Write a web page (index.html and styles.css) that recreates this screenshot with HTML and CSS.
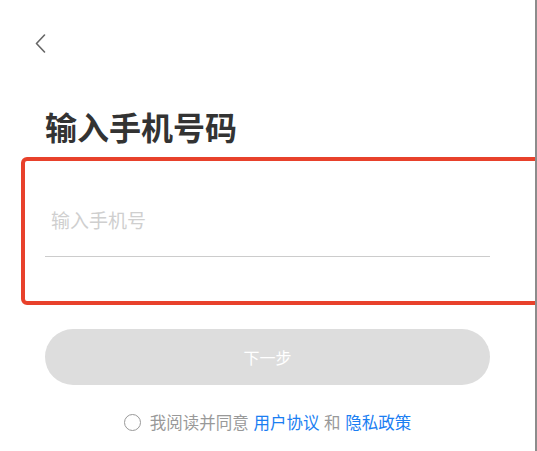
FILE: index.html
```
<!DOCTYPE html>
<html lang="zh-CN">
<head>
<meta charset="utf-8">
<title>输入手机号码</title>
<link rel="stylesheet" href="styles.css">
</head>
<body>
<div class="page">
  <header class="nav">
    <button class="back" aria-label="返回">
      <svg width="11" height="19" viewBox="0 0 11 19"><path d="M9.5 1 L1.5 9.5 L9.5 18" fill="none" stroke="#666" stroke-width="1.6" stroke-linecap="round" stroke-linejoin="round"/></svg>
    </button>
  </header>
  <main class="content">
    <h1 class="title">输入手机号码</h1>
    <input class="phone" type="tel" placeholder="输入手机号">
    <button class="next">下一步</button>
    <div class="agree">
      <span class="radio"></span>
      <span class="agree-text">我阅读并同意 <a class="link">用户协议</a> 和 <a class="link">隐私政策</a></span>
    </div>
  </main>
</div>
<div class="highlight"></div>
<div class="edge"></div>
</body>
</html>
```
FILE: styles.css
```
html, body {
  margin: 0;
  padding: 0;
  background: #fff;
}
body {
  position: relative;
  width: 537px;
  height: 451px;
  overflow: hidden;
  font-family: "Noto Sans CJK SC", "Noto Sans", sans-serif;
}
.page {
  display: flex;
  flex-direction: column;
}
.nav {
  padding: 34px 0 0 35px;
  height: 19px;
}
.back {
  border: 0;
  background: none;
  padding: 0;
  margin: 0;
  display: block;
  width: 11px;
  height: 19px;
}
.back svg { display: block; }
.content {
  width: 445px;
  margin-left: 45px;
  display: flex;
  flex-direction: column;
}
.title {
  margin: 57px 0 0 0;
  font-size: 32px;
  line-height: 32px;
  font-weight: 700;
  color: #333;
  letter-spacing: 0;
}
.phone {
  margin-top: 54px;
  width: 100%;
  box-sizing: border-box;
  border: 0;
  border-bottom: 1px solid #cccccc;
  padding: 14px 6px 28px 6px;
  font-family: inherit;
  font-size: 19px;
  line-height: 18px;
  height: 61px;
  outline: none;
  background: transparent;
  color: #333;
}
.phone::placeholder {
  color: #cfcfcf;
}
.next {
  margin-top: 72px;
  height: 56px;
  width: 100%;
  border: 0;
  border-radius: 28px;
  background: #dddddd;
  color: #fff;
  font-family: inherit;
  font-size: 16px;
  line-height: 16px;
  padding: 0;
}
.agree {
  margin-top: 28px;
  display: flex;
  justify-content: center;
  align-items: center;
  gap: 9px;
  height: 18px;
}
.radio {
  width: 15px;
  height: 15px;
  border: 1.5px solid #999;
  border-radius: 50%;
  flex: none;
}
.agree-text {
  font-size: 16.5px;
  line-height: 18px;
  color: #999;
  white-space: nowrap;
  word-spacing: 1px;
}
.link {
  color: #1a7ef2;
  text-decoration: none;
}
.highlight {
  position: absolute;
  left: 21px;
  top: 157px;
  width: 560px;
  height: 140px;
  border: 4px solid #e8412b;
  border-radius: 6px;
}
.edge {
  position: absolute;
  top: 0;
  right: 0;
  width: 2px;
  height: 451px;
  background: #8c8c8c;
}
```
